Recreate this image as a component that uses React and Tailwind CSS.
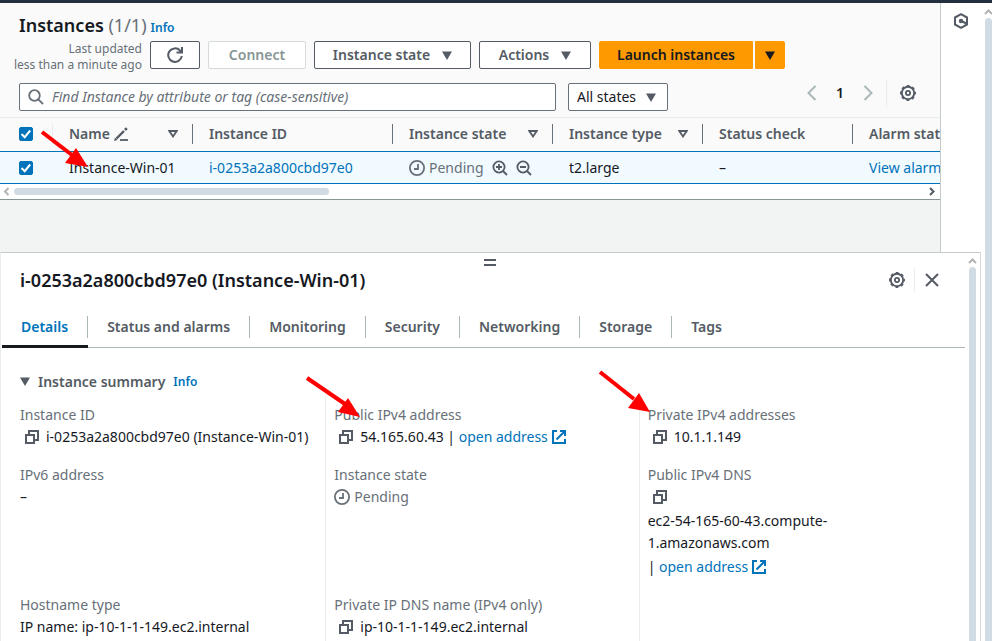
const HEAD = 'text-sm leading-5 font-semibold text-[#545b64]';

function Caret({ className = 'text-[#545b64]' }) {
  return (
    <svg className={`h-[9px] w-[10px] shrink-0 ${className}`} viewBox="0 0 10 9" aria-hidden="true">
      <path d="M0 0.5h10L5 9z" fill="currentColor" />
    </svg>
  );
}

function SortIcon() {
  return (
    <svg className="h-2 w-[10px] shrink-0 text-[#545b64]" viewBox="0 0 10 8" fill="none" stroke="currentColor" strokeWidth="1.8" aria-hidden="true">
      <path d="M1.3 1h7.4L5 6.5z" />
    </svg>
  );
}

function GearIcon() {
  return (
    <svg className="size-4" viewBox="0 0 16 16" fill="none" stroke="currentColor" aria-hidden="true">
      <circle cx="8" cy="8" r="6.2" strokeWidth="1.9" />
      <circle cx="8" cy="8" r="7.3" strokeWidth="1.4" strokeDasharray="2.9 2.83" strokeDashoffset="1.45" />
      <circle cx="8" cy="8" r="2.1" strokeWidth="1.8" />
    </svg>
  );
}

function CopyButton({ label }) {
  return (
    <button type="button" aria-label={label} className="mx-1 inline-flex size-4 items-center justify-center text-[#545b64]">
      <svg className="size-[14px]" viewBox="0 0 14 14" fill="none" stroke="currentColor" strokeWidth="2" aria-hidden="true">
        <path d="M1 5h8v8H1z" />
        <path d="M4 4V1h9v9h-3" />
      </svg>
    </button>
  );
}

function ClockIcon() {
  return (
    <svg className="size-4 shrink-0" viewBox="0 0 16 16" fill="none" stroke="currentColor" strokeWidth="1.8" aria-hidden="true">
      <circle cx="8" cy="8" r="7.1" />
      <path d="M9 4v5H5" />
    </svg>
  );
}

function Magnifier({ sign }) {
  return (
    <svg className="size-4" viewBox="0 0 16 16" fill="none" stroke="currentColor" strokeWidth="1.8" aria-hidden="true">
      <circle cx="7" cy="7" r="5.6" />
      <path d="M11 11l4 4M4 7h6" />
      {sign === 'plus' && <path d="M7 4v6" />}
    </svg>
  );
}

function OpenAddress() {
  return (
    <a href="#open" className="inline-flex items-center gap-1 text-[#0073bb]">
      open address
      <svg className="size-[14px]" viewBox="0 0 14 14" fill="none" stroke="currentColor" strokeWidth="2" aria-hidden="true">
        <path d="M5 1H1v12h12V9" />
        <path d="M8 1h5v5M13 1L4.500 9.500" />
      </svg>
    </a>
  );
}

function ScrollArrow({ d, className }) {
  return (
    <svg className={`size-[9px] shrink-0 ${className}`} viewBox="0 0 9 9" fill="none" stroke="currentColor" strokeWidth="2" aria-hidden="true">
      <path d={d} />
    </svg>
  );
}

function Tick({ label }) {
  return (
    <label className="ml-[19px] grid size-[14px]">
      <input
        type="checkbox"
        defaultChecked
        aria-label={label}
        className="col-start-1 row-start-1 size-[14px] appearance-none rounded-xs border border-[#687078] checked:border-[#0073bb] checked:bg-[#0073bb]"
      />
      <svg className="pointer-events-none col-start-1 row-start-1 size-[14px]" viewBox="0 0 14 14" fill="none" stroke="#fff" strokeWidth="2" aria-hidden="true">
        <path d="M2.500 7l3.200 3.200L11.200 3.500" />
      </svg>
    </label>
  );
}

function Button({ className = '', children, ...rest }) {
  return (
    <button
      type="button"
      className={`flex h-7 items-center justify-center gap-3 rounded-xs border text-sm font-semibold whitespace-nowrap ${className}`}
      {...rest}
    >
      {children}
    </button>
  );
}

function Th({ children, sort }) {
  return (
    <th scope="col" className="p-0 text-left">
      <div className={`flex h-5 items-center justify-between border-r border-[#687078] pr-[14px] pl-4 whitespace-nowrap ${HEAD}`}>
        <span className="flex items-center gap-1">{children}</span>
        {sort && <SortIcon />}
      </div>
    </th>
  );
}

function Toolbar() {
  return (
    <header className="pr-5 pl-[19px]">
      <div className="flex items-baseline gap-1 pt-2 pb-0.5">
        <h1 className="text-lg leading-7 font-semibold text-[#16191f]">
          Instances <span className="font-normal text-[#687078]">(1/1)</span>
        </h1>
        <a href="#info" className="text-xs leading-4 font-semibold text-[#0073bb]">Info</a>
      </div>
      <div className="flex items-center gap-2">
        <p className="flex h-7 w-[123px] flex-col items-end text-xs leading-4 whitespace-nowrap text-[#687078]">
          <span>Last updated</span>
          <span>less than a minute ago</span>
        </p>
        <Button aria-label="Refresh" className="w-[50px] border-[#545b64] bg-white text-[#545b64]">
          <svg className="size-4" viewBox="0 0 16 16" fill="none" stroke="currentColor" strokeWidth="2" aria-hidden="true">
            <path d="M14.800 9A6.800 6.800 0 1 1 13 3.500L14.500 5" />
            <path d="M15 0v5.500H9.500" />
          </svg>
        </Button>
        <Button disabled className="w-[98px] border-[#d5dbdb] bg-white text-[#879596]">Connect</Button>
        <Button className="w-[157px] border-[#545b64] bg-white text-[#545b64]">
          Instance state <Caret />
        </Button>
        <Button className="w-[112px] border-[#545b64] bg-white text-[#545b64]">
          Actions <Caret />
        </Button>
        <div className="flex gap-0.5">
          <Button className="w-[154px] rounded-r-none border-[#ff9900] bg-[#ff9900] text-[#16191f]">Launch instances</Button>
          <Button aria-label="More launch options" className="w-[30px] rounded-l-none border-[#ff9900] bg-[#ff9900]">
            <Caret className="text-[#16191f]" />
          </Button>
        </div>
      </div>
      <div className="flex items-center justify-between pt-[14px] pb-1.5">
        <div className="flex max-w-[649px] flex-1 gap-3">
          <label className="flex h-7 flex-1 items-center gap-2 rounded-xs border border-[#687078] bg-white px-2">
            <svg className="size-4 shrink-0 text-[#687078]" viewBox="0 0 16 16" fill="none" stroke="currentColor" strokeWidth="1.800" aria-hidden="true">
              <circle cx="6.500" cy="6.500" r="5.300" />
              <path d="M10.300 10.300l4.700 4.700" />
            </svg>
            <input
              type="search"
              aria-label="Find Instance"
              placeholder="Find Instance by attribute or tag (case-sensitive)"
              className="w-full bg-transparent text-sm outline-none placeholder:text-[#687078] placeholder:italic"
            />
          </label>
          <label className="grid h-7 w-[100px] items-center">
            <select aria-label="State filter" className="col-start-1 row-start-1 h-7 w-full appearance-none rounded-xs border border-[#687078] bg-white pl-2 text-sm text-[#16191f]">
              <option>All states</option>
            </select>
            <span className="pointer-events-none col-start-1 row-start-1 mr-3 justify-self-end">
              <Caret />
            </span>
          </label>
        </div>
        <div className="flex h-7 items-center pr-1 pb-2">
          <button type="button" aria-label="Previous page" className="text-[#aab7b8]">
            <svg className="h-4 w-[10px]" viewBox="0 0 10 16" fill="none" stroke="currentColor" strokeWidth="2" aria-hidden="true">
              <path d="M8.500 1L1.500 8l7 7" />
            </svg>
          </button>
          <span className="w-[46px] text-center text-sm font-semibold text-[#16191f]">1</span>
          <button type="button" aria-label="Next page" className="text-[#aab7b8]">
            <svg className="h-4 w-[10px]" viewBox="0 0 10 16" fill="none" stroke="currentColor" strokeWidth="2" aria-hidden="true">
              <path d="M1.500 1l7 7-7 7" />
            </svg>
          </button>
          <span className="mr-[13px] ml-[13px] h-7 w-px bg-[#eaeded]" />
          <button type="button" aria-label="Preferences" className="text-[#545b64]">
            <GearIcon />
          </button>
        </div>
      </div>
    </header>
  );
}

function InstancesTable() {
  return (
    <div className="overflow-hidden border-t border-[#eaeded]">
      <table className="w-[1003px] table-fixed border-collapse">
        <colgroup>
          <col className="w-[53px]" />
          <col className="w-[140px]" />
          <col className="w-[200px]" />
          <col className="w-[160px]" />
          <col className="w-[150px]" />
          <col className="w-[150px]" />
          <col className="w-[150px]" />
        </colgroup>
        <thead>
          <tr className="h-[33px]">
            <th scope="col" className="p-0">
              <div className="flex h-5 items-center border-r border-[#eaeded]">
                <Tick label="Select all instances" />
              </div>
            </th>
            <Th sort>
              Name
              <svg className="size-[14px]" viewBox="0 0 14 14" fill="none" stroke="currentColor" aria-hidden="true">
                <path d="M2.500 11.500L10 4" strokeWidth="2.400" />
                <path d="M11 3l1.800-1.800" strokeWidth="2.600" />
                <path d="M0 14l1-3.500 2.500 2.500z" fill="currentColor" stroke="none" />
                <path d="M6 13h8" strokeWidth="1.800" />
              </svg>
            </Th>
            <Th>Instance ID</Th>
            <Th sort>Instance state</Th>
            <Th sort>Instance type</Th>
            <Th>Status check</Th>
            <Th>Alarm status</Th>
          </tr>
        </thead>
        <tbody>
          <tr className="h-8 border-y border-[#0073bb] bg-[#f1faff] text-sm leading-5 whitespace-nowrap text-[#16191f]">
            <td className="p-0 pt-0.5">
              <Tick label="Select Instance-Win-01" />
            </td>
            <td className="p-0 pt-0.5 pl-4">Instance-Win-01</td>
            <td className="p-0 pt-0.5 pl-4">
              <a href="#instance" className="text-[#0073bb]">i-0253a2a800cbd97e0</a>
            </td>
            <td className="p-0 pt-0.5 pl-4">
              <div className="flex items-center text-[#545b64]">
                <span className="mr-2 flex items-center gap-1 text-[#687078]">
                  <ClockIcon />
                  Pending
                </span>
                <button type="button" aria-label="Filter by this value" className="mr-2"><Magnifier sign="plus" /></button>
                <button type="button" aria-label="Exclude this value"><Magnifier sign="minus" /></button>
              </div>
            </td>
            <td className="p-0 pt-0.5 pl-4">t2.large</td>
            <td className="p-0 pt-0.5 pl-4">–</td>
            <td className="p-0 pt-0.5 pl-4">
              <a href="#alarms" className="text-[#0073bb]">View alarms</a>
            </td>
          </tr>
        </tbody>
      </table>
      <div className="flex h-4 items-center justify-between border-b border-[#879596] bg-white px-[3px]">
        <div className="flex flex-1 items-center gap-0.5">
          <ScrollArrow d="M5.500 1L2 4.500 5.500 8" className="text-[#b4b4b4]" />
          <span className="h-[7px] w-[34%] rounded-full bg-[#d1dbe3]" />
        </div>
        <ScrollArrow d="M2 1l3.500 3.500L2 8" className="text-[#545b64]" />
      </div>
    </div>
  );
}

const TABS = ['Details', 'Status and alarms', 'Monitoring', 'Security', 'Networking', 'Storage', 'Tags'];

function Tabs() {
  return (
    <nav role="tablist" className="ml-px flex border-b border-[#aab7b8]">
      {TABS.map((tab, i) => (
        <button
          key={tab}
          type="button"
          role="tab"
          aria-selected={i === 0}
          className={`-mb-px flex h-[42px] items-center border-b-[3px] pt-1 text-sm font-semibold whitespace-nowrap ${
            i === 0 ? 'border-[#16191f] text-[#0073bb]' : 'border-transparent text-[#545b64]'
          }`}
        >
          <span className={`flex h-[22px] items-center px-[19px] ${i < TABS.length - 1 ? 'border-r border-[#aab7b8]' : ''}`}>{tab}</span>
        </button>
      ))}
    </nav>
  );
}

function Field({ label, className = '', children }) {
  return (
    <div className={`pb-4 ${className}`}>
      <dt className="text-[#687078]">{label}</dt>
      <dd className="text-[#16191f]">{children}</dd>
    </div>
  );
}

const FIRST = 'border-r border-[#eaeded]';
const MIDDLE = 'border-r border-[#eaeded] pl-2';
const LAST = 'pl-2';

function Summary() {
  return (
    <section className="pr-3 pl-[19px]">
      <h3 className={`flex items-center gap-2 pt-6 pb-1 ${HEAD}`}>
        <button type="button" className="flex items-center gap-2">
          <Caret /> Instance summary
        </button>
        <a href="#summary-info" className="text-xs text-[#0073bb]">Info</a>
      </h3>
      <dl className="grid grid-cols-[306fr_313fr_313fr] text-sm leading-[22px]">
        <Field label="Instance ID" className={`pt-2 ${FIRST}`}>
          <div className="flex items-center gap-0.5 whitespace-nowrap">
            <CopyButton label="Copy instance ID" />i-0253a2a800cbd97e0 (Instance-Win-01)
          </div>
        </Field>
        <Field label="Public IPv4 address" className={`pt-2 ${MIDDLE}`}>
          <div className="flex items-center gap-0.5 whitespace-nowrap">
            <CopyButton label="Copy public IPv4 address" />
            <span>54.165.60.43 | <OpenAddress /></span>
          </div>
        </Field>
        <Field label="Private IPv4 addresses" className={`pt-2 ${LAST}`}>
          <div className="flex items-center gap-0.5">
            <CopyButton label="Copy private IPv4 address" />10.1.1.149
          </div>
        </Field>
        <Field label="IPv6 address" className={FIRST}>–</Field>
        <Field label="Instance state" className={MIDDLE}>
          <div className="flex items-center gap-1 text-[#687078]">
            <ClockIcon />
            Pending
          </div>
        </Field>
        <Field label="Public IPv4 DNS" className={LAST}>
          <div className="flex h-[22px] items-center">
            <CopyButton label="Copy public IPv4 DNS" />
          </div>
          <p className="mt-0.5">
            ec2-54-165-60-43.compute-
            <br />
            1.amazonaws.com
          </p>
          <p className="mt-0.5">| <OpenAddress /></p>
        </Field>
        <Field label="Hostname type" className={FIRST}>IP name: ip-10-1-1-149.ec2.internal</Field>
        <Field label="Private IP DNS name (IPv4 only)" className={MIDDLE}>
          <div className="flex items-center gap-0.5">
            <CopyButton label="Copy private DNS name" />ip-10-1-1-149.ec2.internal
          </div>
        </Field>
      </dl>
    </section>
  );
}

function DetailsPanel() {
  return (
    <section className="mr-1 flex min-h-0 flex-1 border-x border-t border-r-[#d5dbdb] border-l-[#eaeded] border-t-[#c3caca] bg-white">
      <div className="min-w-0 flex-1">
        <div className="flex justify-center pt-1.5 pl-[14px]">
          <button type="button" aria-label="Resize panel" className="h-[7px] w-3 border-y-2 border-[#545b64]" />
        </div>
        <div className="flex h-7 items-center justify-between pr-[26px] pl-[19px]">
          <h2 className="text-lg leading-7 font-semibold whitespace-nowrap text-[#16191f]">i-0253a2a800cbd97e0 (Instance-Win-01)</h2>
          <div className="flex items-center text-[#545b64]">
            <button type="button" aria-label="Panel preferences"><GearIcon /></button>
            <span className="mr-[10px] ml-[9px] h-6 w-px bg-[#eaeded]" />
            <button type="button" aria-label="Close panel">
              <svg className="size-[14px]" viewBox="0 0 14 14" fill="none" stroke="currentColor" strokeWidth="2" aria-hidden="true">
                <path d="M1 1l12 12M13 1L1 13" />
              </svg>
            </button>
          </div>
        </div>
        <div className="pt-3">
          <Tabs />
          <Summary />
        </div>
      </div>
      <div className="flex w-[15px] flex-col items-center gap-0.5 pt-[3px]">
        <ScrollArrow d="M1 7l3.500-3.500L8 7" className="text-[#b4b4b4]" />
        <span className="w-[7px] flex-1 rounded-t-full bg-[#d1dbe3]" />
      </div>
    </section>
  );
}

function Arrow({ className, d, head }) {
  return (
    <svg className={`pointer-events-none absolute h-[50px] w-[60px] ${className}`} viewBox="0 0 60 50" aria-hidden="true">
      <path d={d} stroke="#f00" strokeWidth="4" />
      <path d={head} fill="#f00" />
    </svg>
  );
}

export default function App() {
  return (
    <div className="relative flex h-screen flex-col overflow-hidden bg-white font-['Noto_Sans','Open_Sans',sans-serif]">
      <div className="h-[3px] shrink-0 bg-[#232f3e]" />
      <div className="flex min-h-0 flex-1">
        <div className="flex min-w-0 flex-1 flex-col">
          <div className="flex shrink-0">
            <main className="min-w-0 flex-1 bg-[#f2f3f3] pb-[52px]">
              <div className="bg-[#fafafa]">
                <Toolbar />
                <InstancesTable />
              </div>
            </main>
            <aside className="flex w-[45px] justify-center border-l border-[#c3caca] bg-white pt-[10px] pr-1">
              <button type="button" aria-label="Diagnostics" className="h-4 text-[#545b64]">
                <svg className="size-4" viewBox="0 0 16 16" fill="none" stroke="currentColor" strokeWidth="2" aria-hidden="true">
                  <path d="M8 1.200l6 3.300v7l-6 3.300-6-3.300v-7z" strokeLinejoin="round" />
                  <path d="M8 8l5.500 2.500" />
                  <circle cx="8" cy="8" r="2.200" fill="currentColor" stroke="none" />
                </svg>
              </button>
            </aside>
          </div>
          <DetailsPanel />
        </div>
        <div className="flex w-[7px] flex-col items-center gap-0.5 pt-1">
          <ScrollArrow d="M1 7l3.500-3.500L8 7" className="text-[#b4b4b4]" />
          <span className="w-full flex-1 rounded-t-full bg-[#d1dbe3]" />
        </div>
      </div>
      <Arrow className="top-[125px] left-[35px]" d="M7 7l30 23" head="M41 23L53 42 30 38z" />
      <Arrow className="top-[370px] left-[300px]" d="M7 8l38 26" head="M48 28L60 47 38 42z" />
      <Arrow className="top-[365px] left-[592px]" d="M8 7l34 27" head="M47 28L58 47 36 43z" />
    </div>
  );
}
